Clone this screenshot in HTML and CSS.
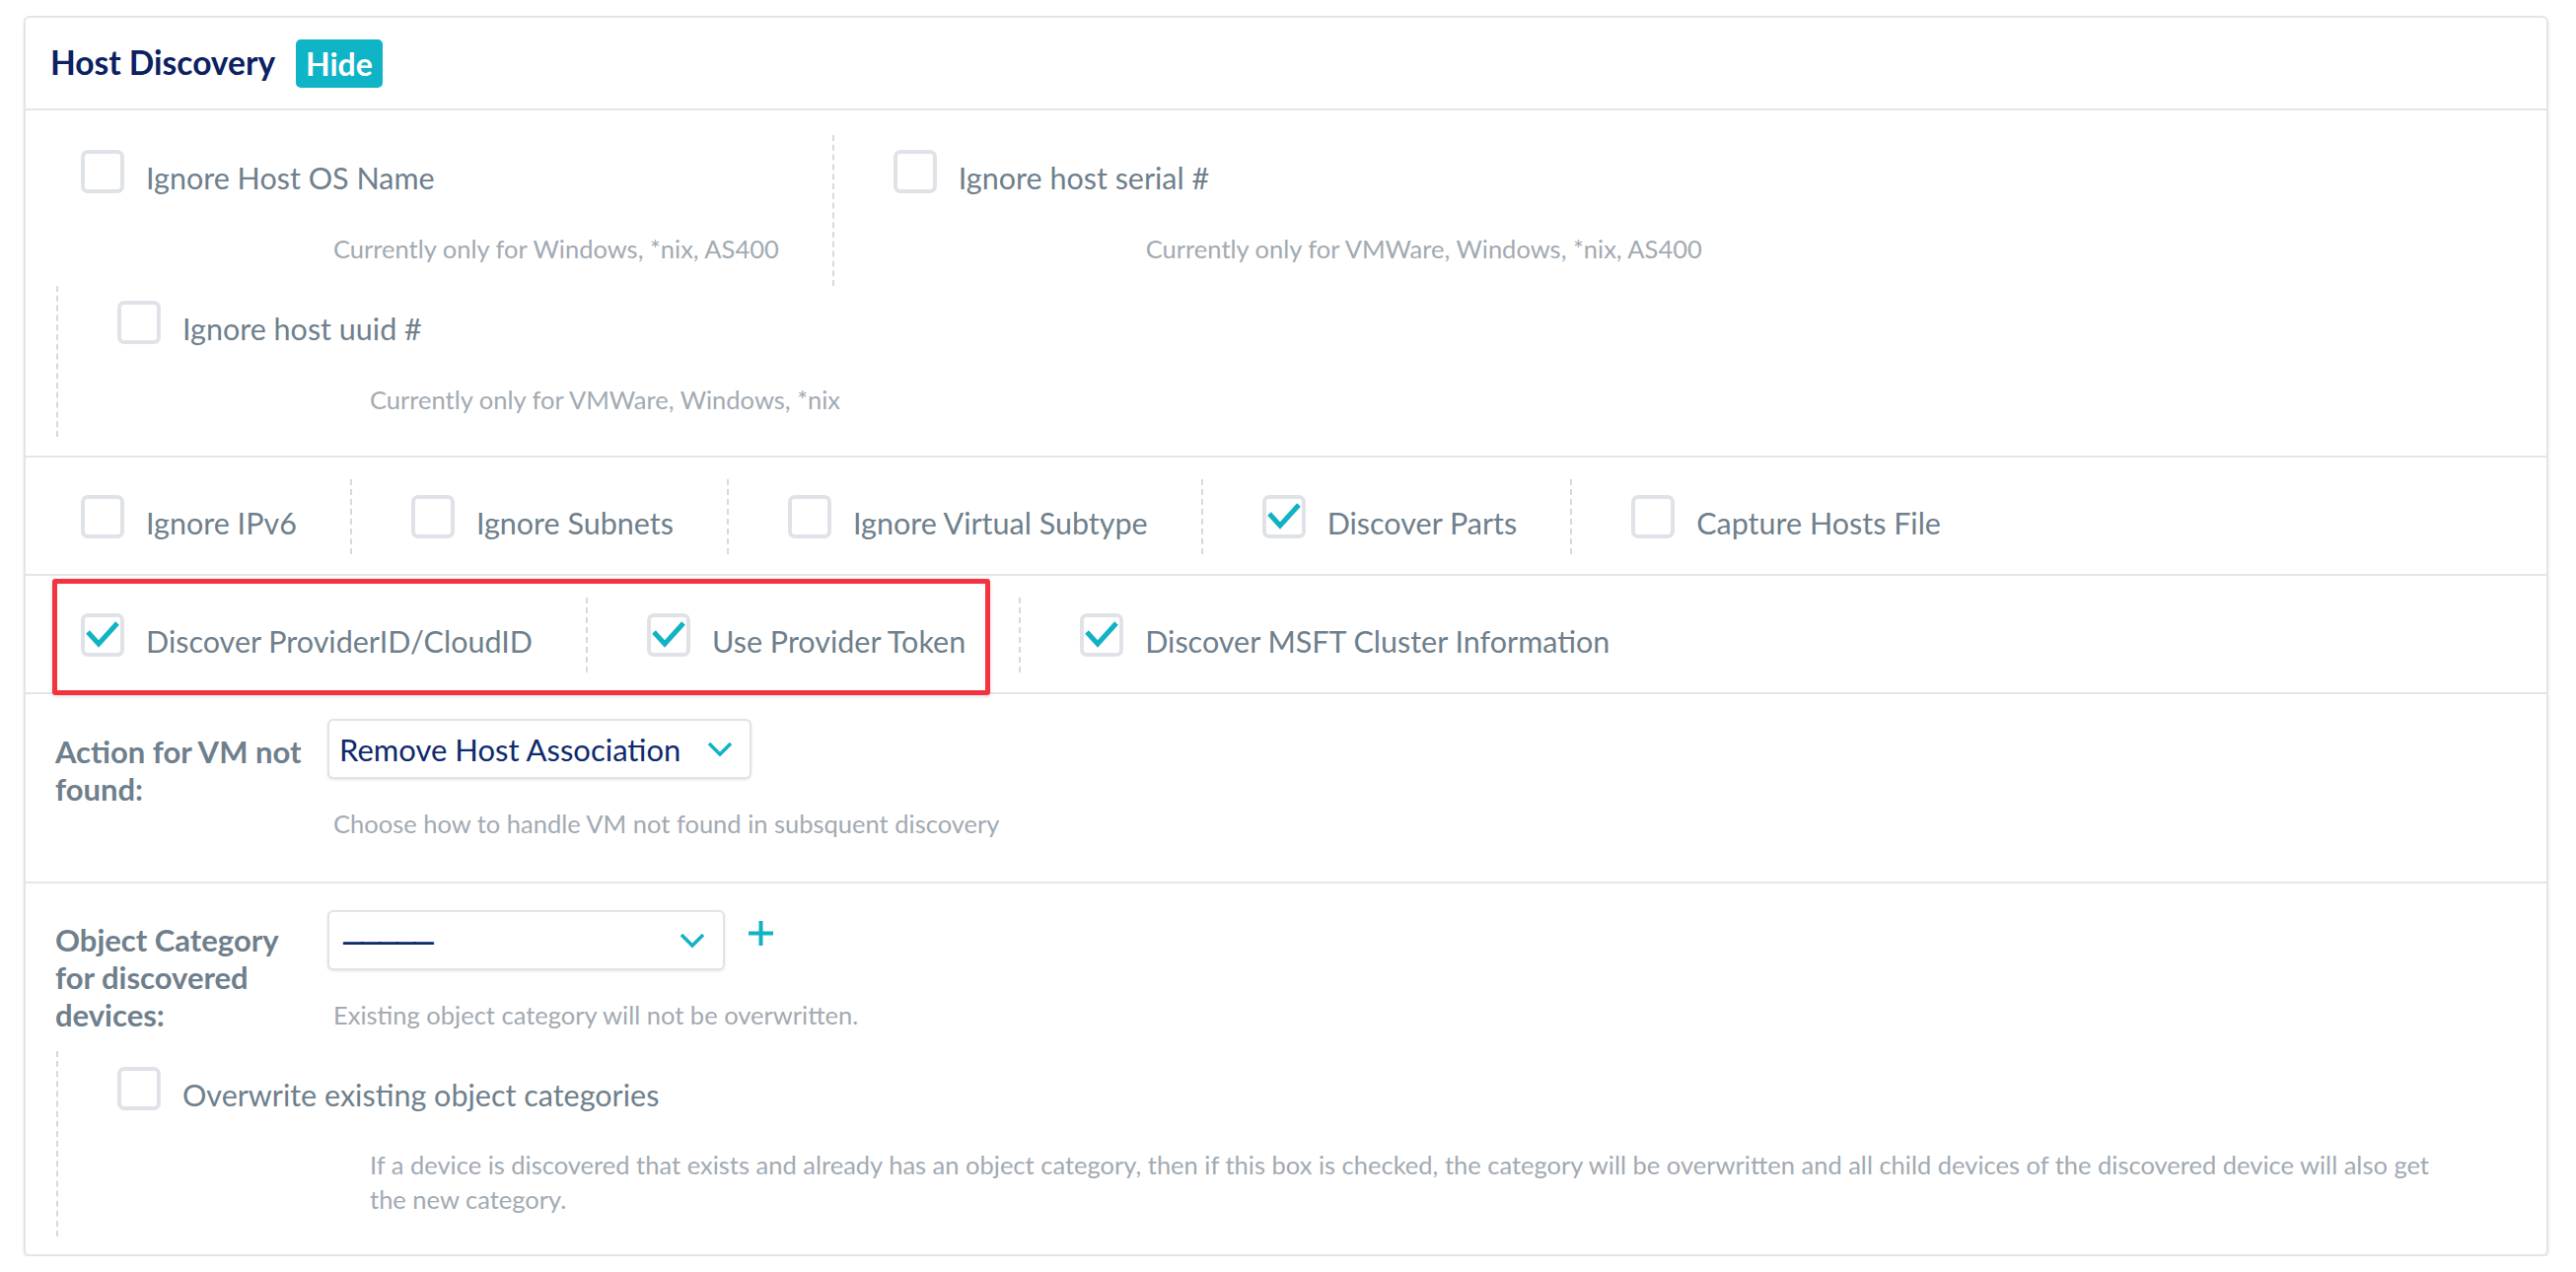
FILE: index.html
```html
<!DOCTYPE html>
<html lang="en">
<head>
<meta charset="utf-8">
<title>Host Discovery</title>
<link rel="stylesheet" href="styles.css">
</head>
<body>
<div class="card">
  <div class="card-header">
    <h2 class="title">Host Discovery</h2>
    <span class="badge">Hide</span>
  </div>

  <div class="section opts wrap">
    <div class="opt first">
      <div class="opt-row"><span class="cb"></span><span class="opt-label">Ignore Host OS Name</span></div>
      <div class="opt-help">Currently only for Windows, *nix, AS400</div>
    </div>
    <div class="opt">
      <div class="opt-row"><span class="cb"></span><span class="opt-label">Ignore host serial #</span></div>
      <div class="opt-help">Currently only for VMWare, Windows, *nix, AS400</div>
    </div>
    <div class="opt">
      <div class="opt-row"><span class="cb"></span><span class="opt-label">Ignore host uuid #</span></div>
      <div class="opt-help">Currently only for VMWare, Windows, *nix</div>
    </div>
  </div>

  <div class="section opts inline">
    <div class="opt first">
      <div class="opt-row"><span class="cb"></span><span class="opt-label">Ignore IPv6</span></div>
    </div>
    <div class="opt">
      <div class="opt-row"><span class="cb"></span><span class="opt-label">Ignore Subnets</span></div>
    </div>
    <div class="opt">
      <div class="opt-row"><span class="cb"></span><span class="opt-label">Ignore Virtual Subtype</span></div>
    </div>
    <div class="opt">
      <div class="opt-row"><span class="cb checked"><svg class="tick" viewBox="0 0 36 36"><polyline points="3,15 14,27 33,6"/></svg></span><span class="opt-label">Discover Parts</span></div>
    </div>
    <div class="opt">
      <div class="opt-row"><span class="cb"></span><span class="opt-label">Capture Hosts File</span></div>
    </div>
  </div>

  <div class="section opts inline marked">
    <div class="opt first">
      <div class="opt-row"><span class="cb checked"><svg class="tick" viewBox="0 0 36 36"><polyline points="3,15 14,27 33,6"/></svg></span><span class="opt-label">Discover ProviderID/CloudID</span></div>
    </div>
    <div class="opt">
      <div class="opt-row"><span class="cb checked"><svg class="tick" viewBox="0 0 36 36"><polyline points="3,15 14,27 33,6"/></svg></span><span class="opt-label">Use Provider Token</span></div>
    </div>
    <div class="opt">
      <div class="opt-row"><span class="cb checked"><svg class="tick" viewBox="0 0 36 36"><polyline points="3,15 14,27 33,6"/></svg></span><span class="opt-label">Discover MSFT Cluster Information</span></div>
    </div>
    <div class="red-box"></div>
  </div>

  <div class="section form action">
    <div class="form-row">
      <div class="form-label">Action for VM not found:</div>
      <div class="form-field">
        <div class="field-line">
          <div class="select w1">
            <span class="select-value">Remove Host Association</span>
            <svg class="chev" viewBox="0 0 26 16"><polyline points="2,2 13,13 24,2"/></svg>
          </div>
        </div>
        <div class="field-help">Choose how to handle VM not found in subsquent discovery</div>
      </div>
    </div>
  </div>

  <div class="section form category">
    <div class="form-row">
      <div class="form-label lbl2">Object Category for discovered devices:</div>
      <div class="form-field">
        <div class="field-line">
          <div class="select w2">
            <span class="select-value placeholder">—————</span>
            <svg class="chev" viewBox="0 0 26 16"><polyline points="2,2 13,13 24,2"/></svg>
          </div>
          <svg class="plus" viewBox="0 0 27 27"><path d="M13.5 1v25M1 13.5h25"/></svg>
        </div>
        <div class="field-help">Existing object category will not be overwritten.</div>
      </div>
    </div>
    <div class="opt sub">
      <div class="opt-row"><span class="cb"></span><span class="opt-label">Overwrite existing object categories</span></div>
      <div class="opt-help">If a device is discovered that exists and already has an object category, then if this box is checked, the category will be overwritten and all child devices of the discovered device will also get the new category.</div>
    </div>
  </div>
</div>
</body>
</html>
```

FILE: styles.css
```css
* { box-sizing: border-box; }

body {
  margin: 0;
  padding: 16px 28px 0 24px;
  background: #ffffff;
  font-family: Lato, "Liberation Sans", sans-serif;
}

.card {
  border: 2px solid #e2e5e9;
  border-radius: 6px;
  background: #ffffff;
  box-shadow: 0 2px 3px rgba(0, 0, 0, 0.10);
}

.card-header {
  height: 94px;
  display: flex;
  align-items: center;
  gap: 21px;
  padding-left: 25px;
  border-bottom: 2px solid #e2e6ea;
}

.title {
  margin: 0;
  font-size: 33.5px;
  font-weight: 700;
  line-height: 1;
  color: #0b2161;
}

.badge {
  height: 49px;
  display: flex;
  align-items: center;
  padding: 0 10px;
  border-radius: 5px;
  background: #0fb4c7;
  color: #ffffff;
  font-size: 32px;
  font-weight: 700;
}

.section { border-bottom: 2px solid #e2e6ea; }
.section:last-child { border-bottom: 0; }

.opts {
  display: flex;
  flex-wrap: wrap;
  align-items: flex-start;
}

.wrap { padding: 25px 60px 19px 0; }
.inline { padding: 22px 0 20px 0; }
.marked { position: relative; }

.opt {
  margin-left: 31px;
  border-left: 2px dashed #d6dade;
  padding: 15px 23px 20px 60px;
}
.opt.first {
  margin-left: 0;
  border-left: 0;
  padding-left: 56px;
}
.inline .opt {
  padding-top: 16px;
  padding-bottom: 10px;
}

.opt-row {
  display: flex;
  align-items: flex-start;
}

.cb {
  flex: none;
  display: block;
  width: 44px;
  height: 44px;
  border: 4px solid #dfe3e8;
  border-radius: 7px;
  background: #ffffff;
}

.tick {
  display: block;
  width: 36px;
  height: 36px;
  overflow: visible;
}
.tick polyline {
  fill: none;
  stroke: #12b2c5;
  stroke-width: 5;
}

.opt-label {
  margin-left: 22px;
  padding-top: 6px;
  line-height: 44px;
  font-size: 30.5px;
  color: #6f7f8c;
  white-space: nowrap;
}

.opt-help {
  margin-top: 32px;
  margin-left: 256px;
  font-size: 25.5px;
  line-height: 36px;
  color: #a2aab2;
}

.red-box {
  position: absolute;
  left: 27px;
  top: 3px;
  width: 951px;
  height: 118px;
  border: 5px solid #f5333f;
  border-radius: 3px;
  box-shadow: 0 1px 4px rgba(0, 0, 0, 0.15);
  pointer-events: none;
}

.action { padding: 25px 0 41px 0; }
.category { padding: 27px 0 18px 0; }

.form-row {
  display: flex;
  align-items: flex-start;
  padding-left: 30px;
}

.form-label {
  flex: none;
  width: 258px;
  margin-right: 18px;
  padding-top: 14px;
  font-size: 31px;
  font-weight: 700;
  line-height: 38px;
  color: #6f7f8c;
}
.form-label.lbl2 { padding-top: 11px; }

.field-line {
  display: flex;
  align-items: flex-start;
  gap: 23px;
}

.select {
  display: flex;
  align-items: center;
  justify-content: space-between;
  height: 61px;
  padding: 0 17px 0 10px;
  border: 2px solid #e0e3e7;
  border-radius: 6px;
  background: #ffffff;
  box-shadow: 0 1px 3px rgba(0, 0, 0, 0.10);
}
.select.w1 { width: 430px; }
.select.w2 { width: 403px; padding-right: 18px; }

.select-value {
  font-size: 31px;
  color: #0e2a6b;
  white-space: nowrap;
}
.select-value.placeholder {
  margin-left: 2px;
  letter-spacing: -7px;
  font-weight: 700;
}

.chev {
  display: block;
  width: 26px;
  height: 16px;
}
.chev polyline {
  fill: none;
  stroke: #12b2c5;
  stroke-width: 3.5;
}

.plus {
  display: block;
  width: 27px;
  height: 27px;
  margin-top: 10px;
}
.plus path {
  fill: none;
  stroke: #12b2c5;
  stroke-width: 4;
}

.field-help {
  margin: 27px 0 0 6px;
  font-size: 25.5px;
  line-height: 36px;
  color: #a2aab2;
}

.opt.sub {
  margin-top: 18px;
  padding-top: 16px;
  padding-right: 88px;
}
.opt.sub .opt-help { line-height: 35px; }
```
